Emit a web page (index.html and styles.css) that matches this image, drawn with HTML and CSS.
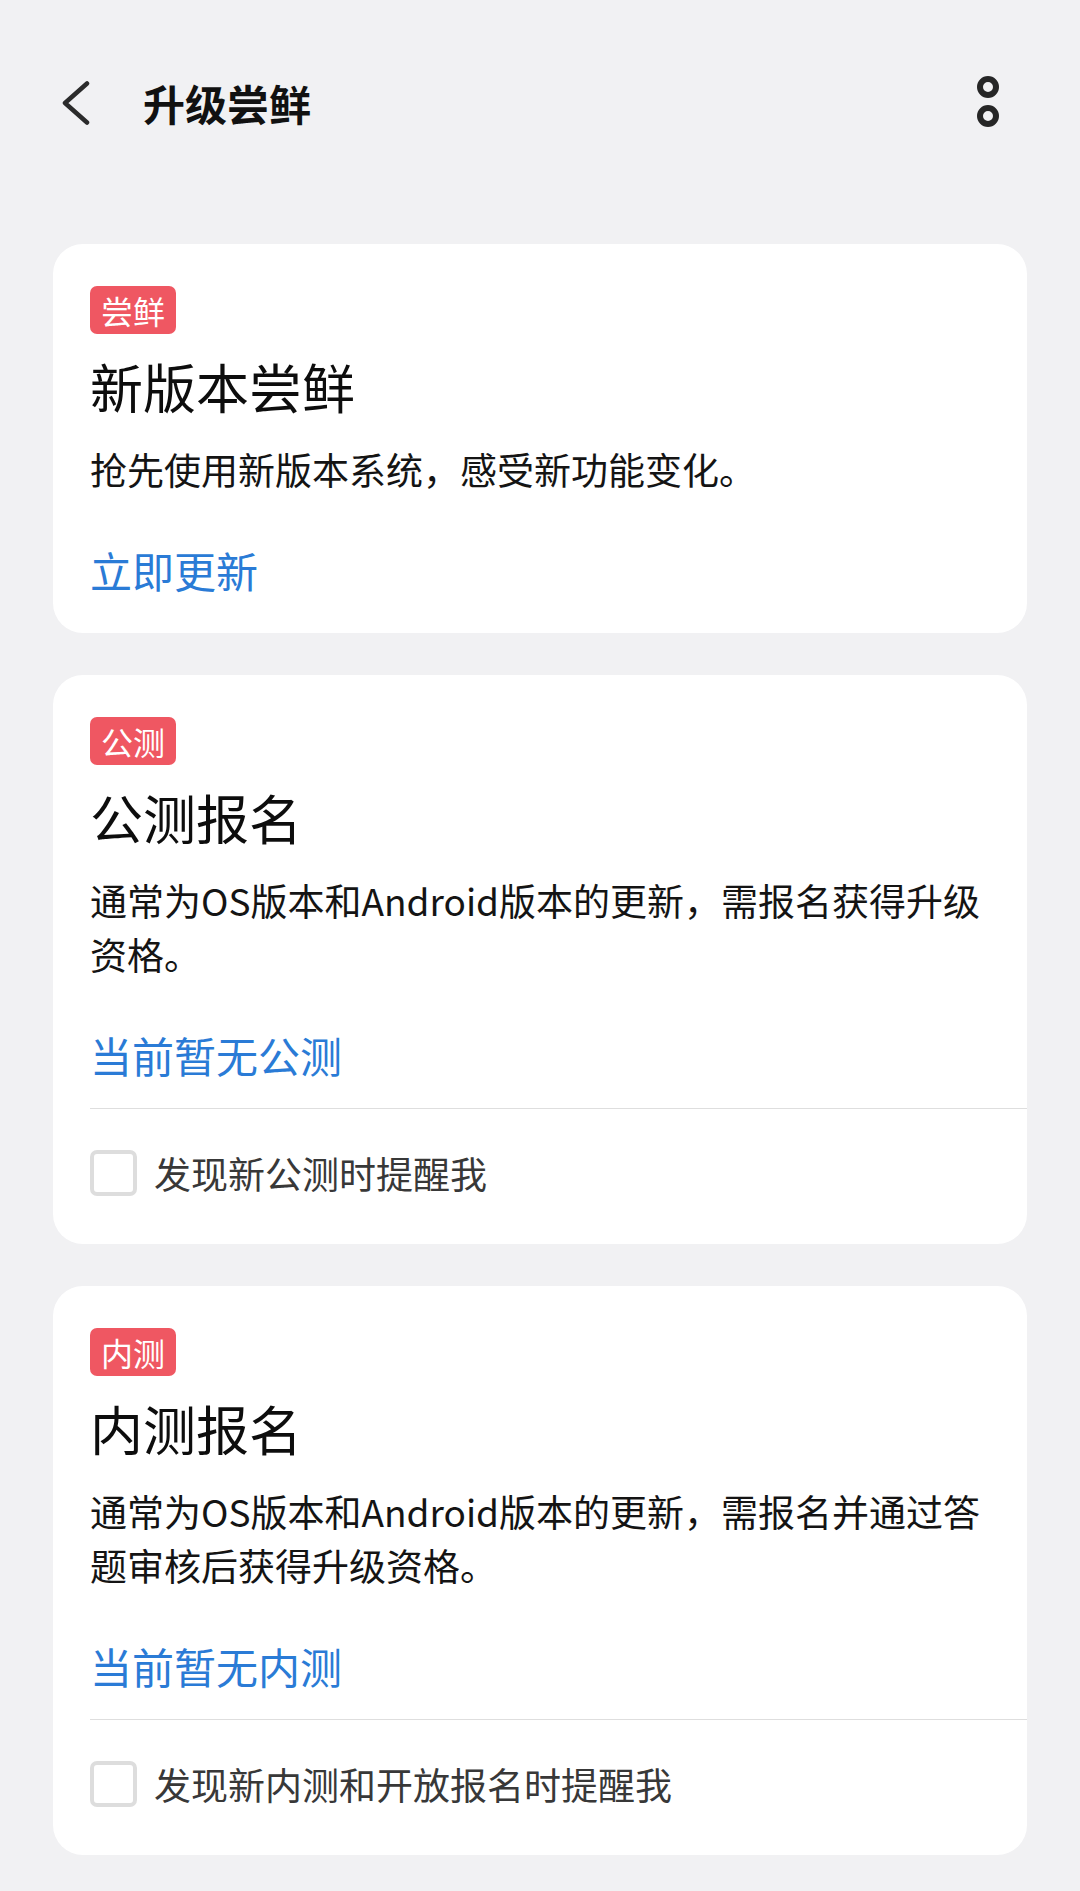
FILE: index.html
```html
<!DOCTYPE html>
<html lang="zh-CN">
<head>
    <meta charset="UTF-8">
    <meta name="viewport" content="width=device-width, initial-scale=1.0">
    <title>升级尝鲜</title>
    <link rel="stylesheet" href="styles.css">
</head>
<body>
    <header class="topbar">
        <button type="button" class="icon-btn back-btn" aria-label="返回">
            <svg width="34" height="44" viewBox="0 0 34 44">
                <path d="M27 2.5 L5 22 L27 41.5" fill="none" stroke="#2b2b2b" stroke-width="4.5" stroke-linecap="round" stroke-linejoin="round"/>
            </svg>
        </button>
        <h1 class="page-title">升级尝鲜</h1>
        <button type="button" class="icon-btn more-btn" aria-label="更多">
            <svg width="30" height="56" viewBox="0 0 30 56">
                <circle cx="15" cy="12" r="8" fill="none" stroke="#262626" stroke-width="6"/>
                <circle cx="15" cy="41" r="8" fill="none" stroke="#262626" stroke-width="6"/>
            </svg>
        </button>
    </header>

    <main class="cards">
        <section class="card">
            <div class="card-body">
                <span class="tag">尝鲜</span>
                <h2 class="card-title">新版本尝鲜</h2>
                <p class="card-desc">抢先使用新版本系统，感受新功能变化。</p>
                <a class="card-link" href="#">立即更新</a>
            </div>
        </section>

        <section class="card has-reminder">
            <div class="card-body">
                <span class="tag">公测</span>
                <h2 class="card-title">公测报名</h2>
                <p class="card-desc">通常为OS版本和Android版本的更新，需报名获得升级资格。</p>
                <a class="card-link" href="#">当前暂无公测</a>
            </div>
            <label class="reminder">
                <input type="checkbox">
                <span class="box"></span>
                <span class="reminder-text">发现新公测时提醒我</span>
            </label>
        </section>

        <section class="card has-reminder">
            <div class="card-body">
                <span class="tag">内测</span>
                <h2 class="card-title">内测报名</h2>
                <p class="card-desc">通常为OS版本和Android版本的更新，需报名并通过答题审核后获得升级资格。</p>
                <a class="card-link" href="#">当前暂无内测</a>
            </div>
            <label class="reminder">
                <input type="checkbox">
                <span class="box"></span>
                <span class="reminder-text">发现新内测和开放报名时提醒我</span>
            </label>
        </section>
    </main>
</body>
</html>
```

FILE: styles.css
```css
body {
    margin: 0;
    padding: 0;
    background-color: #f1f1f3;
    font-family: "Noto Sans CJK SC", "Noto Sans", sans-serif;
    color: #111;
}
.topbar {
    height: 206px;
    display: flex;
    align-items: center;
    padding: 0 77px 0 60px;
    box-sizing: border-box;
}
.icon-btn {
    background: none;
    border: none;
    padding: 0;
    display: flex;
    cursor: pointer;
}
.page-title {
    flex: 1;
    margin: 0 0 0 49px;
    font-size: 42px;
    font-weight: 700;
    line-height: 56px;
    color: #111;
}
.cards {
    display: flex;
    flex-direction: column;
    gap: 42px;
    padding: 38px 53px 40px;
}
.card {
    background-color: #fff;
    border-radius: 30px;
    padding: 42px 0 35px 37px;
}
.card.has-reminder {
    padding-bottom: 0;
}
.card-body {
    display: flex;
    flex-direction: column;
    align-items: flex-start;
    padding-right: 37px;
}
.tag {
    height: 48px;
    line-height: 48px;
    padding: 0 11px;
    border-radius: 7px;
    background-color: #ef5762;
    color: #fff;
    font-size: 32px;
}
.card-title {
    margin: 18px 0 0;
    font-size: 53px;
    font-weight: 400;
    line-height: 68px;
    color: #0d0d0d;
}
.card-desc {
    margin: 22px 0 0;
    font-size: 37px;
    line-height: 54px;
    color: #141414;
}
.card-link {
    margin-top: 46px;
    font-size: 42px;
    line-height: 56px;
    color: #2a7bd6;
    text-decoration: none;
}
.reminder {
    display: flex;
    align-items: center;
    margin-top: 25px;
    border-top: 1px solid #dedede;
    padding: 41px 0 48px;
    cursor: pointer;
}
.reminder input {
    display: none;
}
.box {
    width: 47px;
    height: 46px;
    box-sizing: border-box;
    border: 4px solid #dddddd;
    border-radius: 7px;
}
.reminder-text {
    margin-left: 17px;
    font-size: 37px;
    line-height: 46px;
    color: #383838;
}
```
